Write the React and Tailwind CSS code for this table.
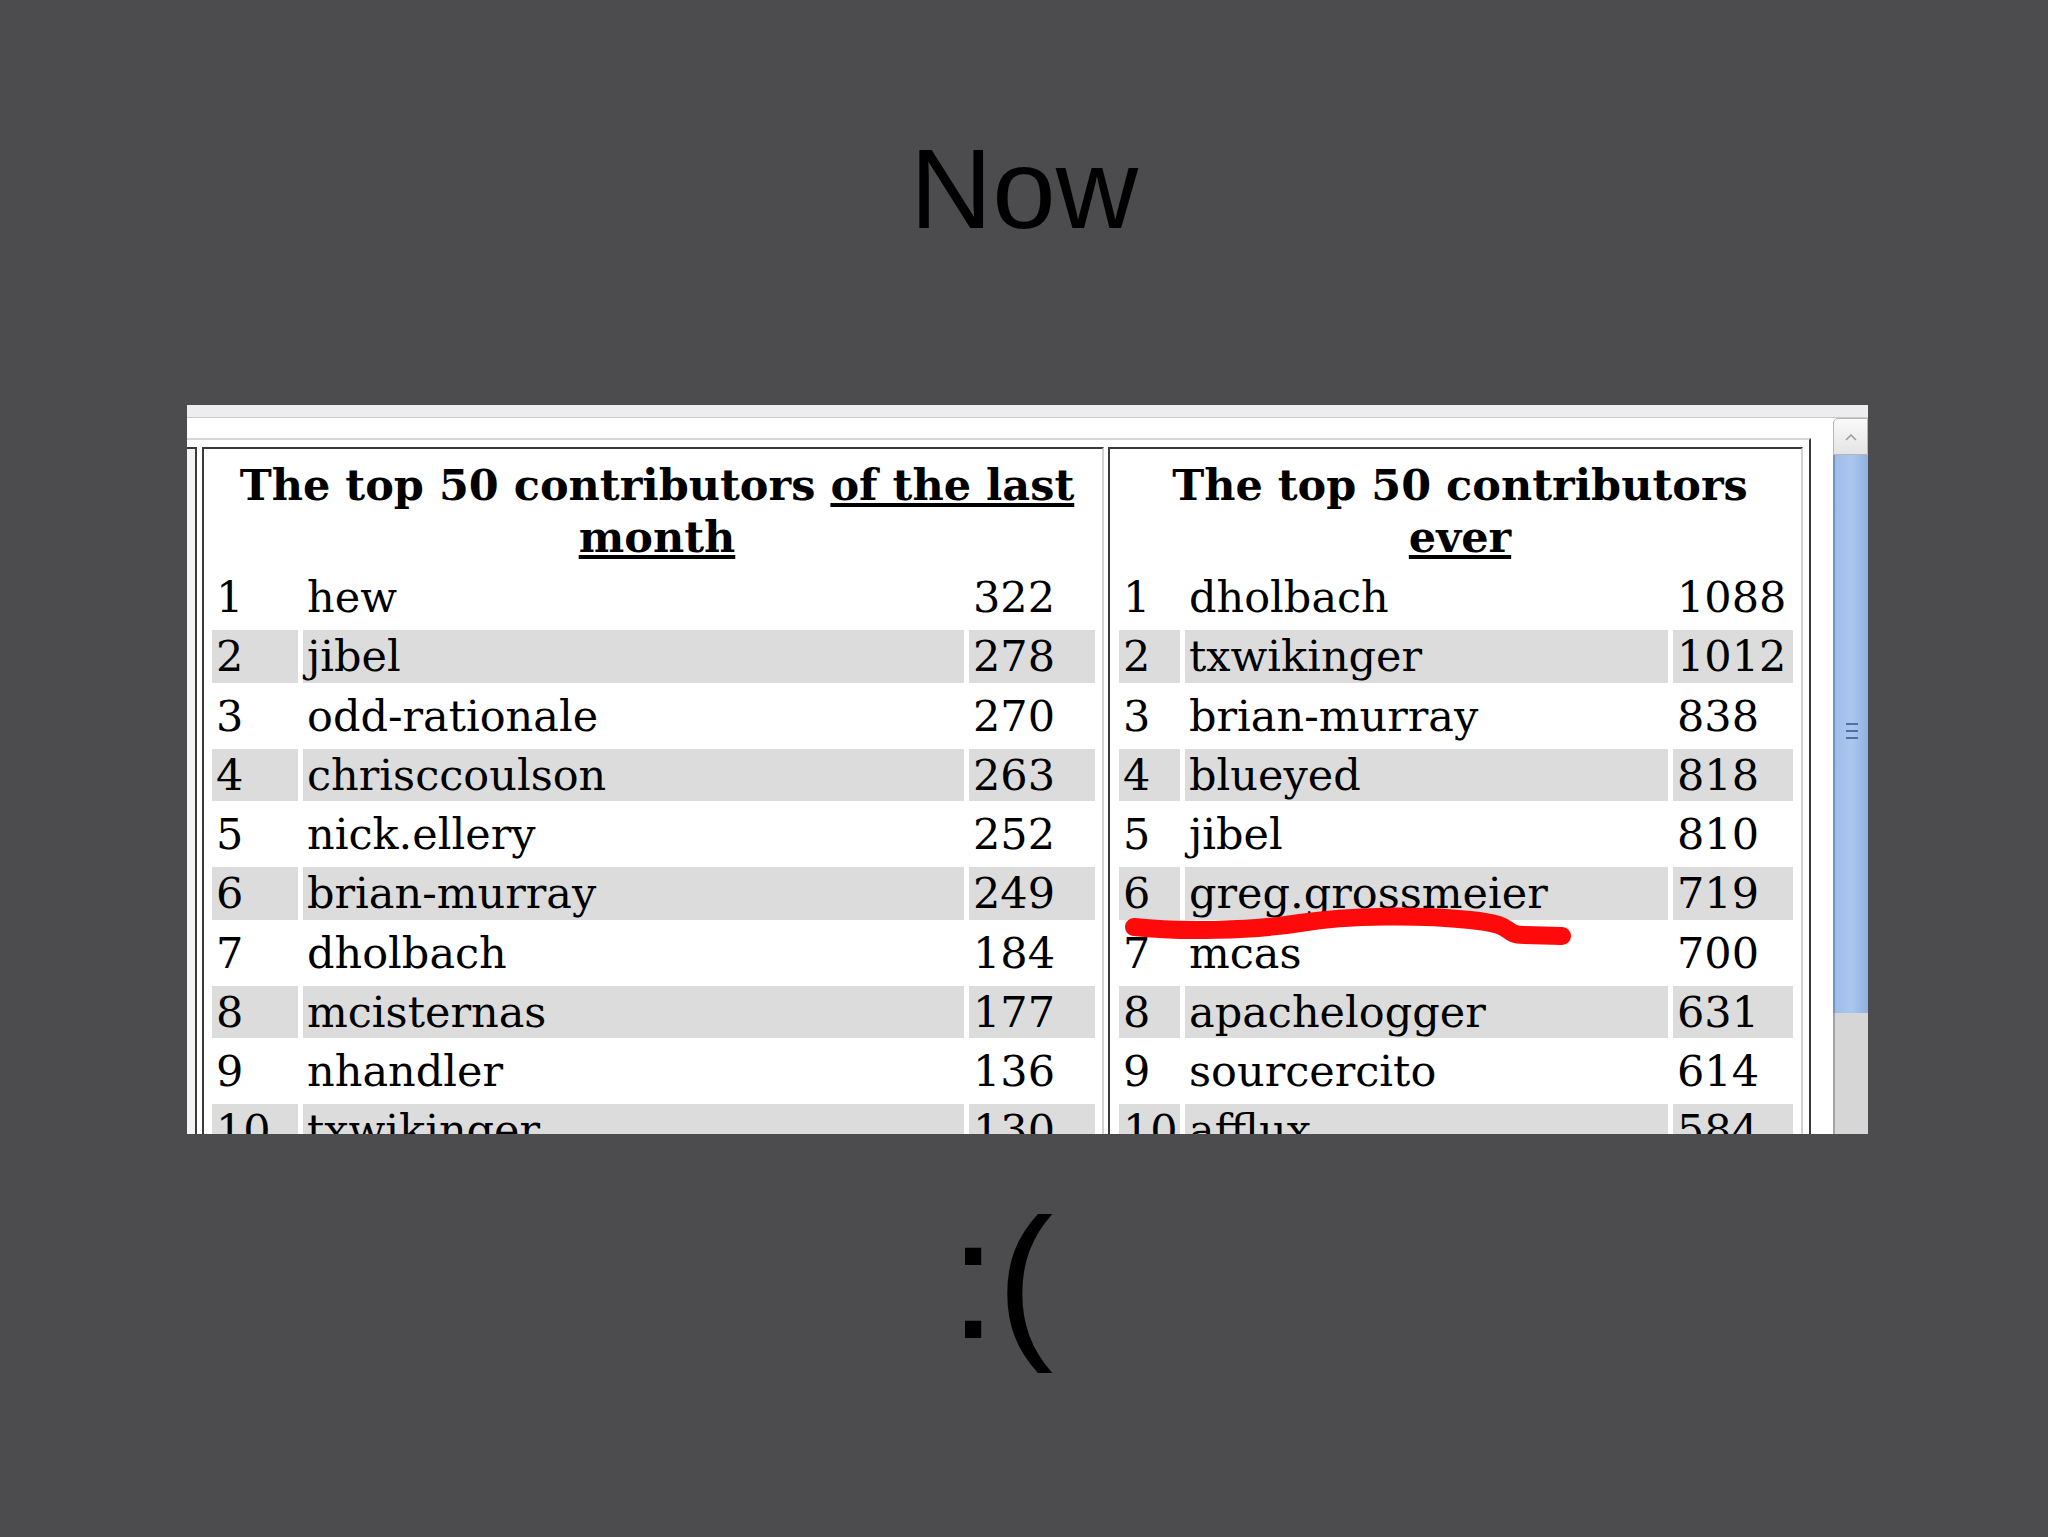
import React from 'react'

const monthRows = [
  [1, 'hew', 322],
  [2, 'jibel', 278],
  [3, 'odd-rationale', 270],
  [4, 'chrisccoulson', 263],
  [5, 'nick.ellery', 252],
  [6, 'brian-murray', 249],
  [7, 'dholbach', 184],
  [8, 'mcisternas', 177],
  [9, 'nhandler', 136],
  [10, 'txwikinger', 130],
]

const everRows = [
  [1, 'dholbach', 1088],
  [2, 'txwikinger', 1012],
  [3, 'brian-murray', 838],
  [4, 'blueyed', 818],
  [5, 'jibel', 810],
  [6, 'greg.grossmeier', 719],
  [7, 'mcas', 700],
  [8, 'apachelogger', 631],
  [9, 'sourcercito', 614],
  [10, 'afflux', 584],
]

function Board({ title, rows, cols, className }) {
  return (
    <div className={`shrink-0 self-stretch border-t-2 border-l-2 border-r-2 border-t-[#3a3a3a] border-l-[#3a3a3a] border-r-[#d2d2d2] pt-[10px] ${className}`}>
      <div className="h-[104px] text-center text-[43px] leading-[52px] font-bold text-black">{title}</div>
      <div className={`mt-[8px] grid gap-x-[5px] gap-y-[7px] ${cols}`}>
        {rows.map(([rank, name, count]) => {
          const band = rank % 2 === 0 ? 'bg-[#dcdcdc]' : ''
          return (
            <React.Fragment key={rank}>
              <div className={`h-[52.25px] pl-[4px] leading-[52.25px] whitespace-nowrap ${band}`}>{rank}</div>
              <div className={`h-[52.25px] pl-[4px] leading-[52.25px] whitespace-nowrap ${band}`}>{name}</div>
              <div className={`h-[52.25px] pl-[4px] leading-[52.25px] whitespace-nowrap ${band}`}>{count}</div>
            </React.Fragment>
          )
        })}
      </div>
    </div>
  )
}

function Scrollbar() {
  return (
    <div className="w-[35px] shrink-0 flex flex-col">
      <div className="h-[37px] shrink-0 rounded-tl-[5px] border border-[#b5b5b5] bg-gradient-to-b from-[#fafafa] to-[#e4e4e4] flex items-center justify-center">
        <svg width="14" height="8" viewBox="0 0 14 8">
          <polyline points="2,7 7,2 12,7" fill="none" stroke="#9a9a9a" strokeWidth="1.5" />
        </svg>
      </div>
      <div className="h-[558px] shrink-0 border-l-2 border-[#7393c2] bg-gradient-to-r from-[#9dbde8] via-[#abc7ee] to-[#8fb1e0] flex flex-col items-center justify-center gap-[5px] pb-[6px]">
        <div className="h-[2px] w-[12px] bg-[#4f6f9e]" />
        <div className="h-[2px] w-[12px] bg-[#4f6f9e]" />
        <div className="h-[2px] w-[12px] bg-[#4f6f9e]" />
      </div>
      <div className="flex-1 border-l-2 border-[#a4a4a4] bg-[#d6d6d6]" />
    </div>
  )
}

export default function App() {
  return (
    <div className="relative min-h-screen w-full overflow-hidden bg-[#4c4b4d] pb-[100px]">
      <h1 className="pt-[132px] text-center text-[114px] leading-none font-normal text-black font-['Liberation_Sans',Arial,sans-serif]">
        Now
      </h1>

      <div className="mt-[159px] ml-[187px] w-[1681px] h-[729px] overflow-hidden bg-white flex flex-col font-['DejaVu_Serif',serif] text-[43px] text-black">
        <div className="h-[13px] shrink-0 bg-[#ededed] border-b border-[#cbcbcb]" />
        <div className="flex flex-1 min-h-0">
          <div className="flex-1 flex flex-col min-w-0">
            <div className="h-[20px] shrink-0" />
            <div className="w-[1624px] flex-1 flex items-start border-t-2 border-t-[#d6d6d6] border-r-2 border-r-[#3a3a3a] pt-[7px]">
              <div className="w-[10px] shrink-0 self-stretch border-t-2 border-r-2 border-[#3a3a3a] bg-[#f3f3f3]" />
              <Board
                className="ml-[5px] w-[902px] pl-[8px]"
                cols="grid-cols-[86px_661px_126px]"
                rows={monthRows}
                title={
                  <>
                    The top 50 contributors <span className="underline">of the last</span>
                    <br />
                    <span className="underline">month</span>
                  </>
                }
              />
              <Board
                className="ml-[4px] w-[695px] pl-[9px]"
                cols="grid-cols-[61px_483px_120px]"
                rows={everRows}
                title={
                  <>
                    The top 50 contributors
                    <br />
                    <span className="underline">ever</span>
                  </>
                }
              />
            </div>
          </div>
          <Scrollbar />
        </div>
      </div>

      <p className="mt-[60px] pr-[45px] text-center text-[170px] leading-none text-black font-['Liberation_Sans',Arial,sans-serif]">
        :(
      </p>

      <svg className="pointer-events-none absolute left-0 top-0" width="2048" height="1537" viewBox="0 0 2048 1537">
        <path
          d="M1134 927 C1180 932, 1250 931, 1300 923 S1420 915, 1470 920 S1500 934, 1524 935 L1562 936"
          fill="none"
          stroke="#ff0a0a"
          strokeWidth="18"
          strokeLinecap="round"
          strokeLinejoin="round"
        />
      </svg>
    </div>
  )
}
